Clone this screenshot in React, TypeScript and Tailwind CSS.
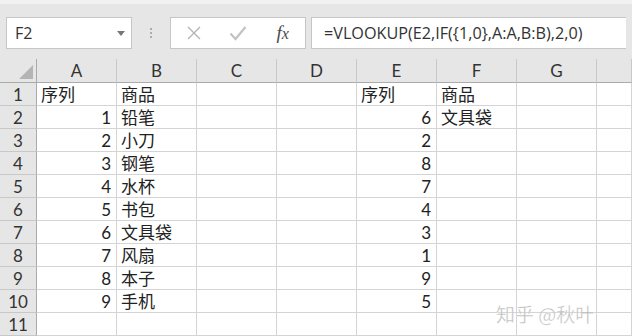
import React from 'react';

const COLS = ['A', 'B', 'C', 'D', 'E', 'F', 'G', ''];

// row data: [A, B, E, F]
const ROWS: [string, string, string, string][] = [
  ['序列', '商品', '序列', '商品'],
  ['1', '铅笔', '6', '文具袋'],
  ['2', '小刀', '2', ''],
  ['3', '钢笔', '8', ''],
  ['4', '水杯', '7', ''],
  ['5', '书包', '4', ''],
  ['6', '文具袋', '3', ''],
  ['7', '风扇', '1', ''],
  ['8', '本子', '9', ''],
  ['9', '手机', '5', ''],
  ['', '', '', ''],
];

const FONT = { fontFamily: 'Lato, "Noto Sans CJK SC", sans-serif' };

const isNum = (s: string) => /^\d+$/.test(s);

const Cell: React.FC<{ value?: string }> = ({ value = '' }) => (
  <div
    className={`h-[23px] border-r border-b border-[#d4d4d4] pl-[4px] pr-[5px] pt-[1px] text-[17px] leading-[22px] text-[#222] whitespace-nowrap overflow-visible ${
      isNum(value) ? 'text-right' : 'text-left'
    }`}
  >
    {value}
  </div>
);

export default function App() {
  return (
    <div className="relative w-[632px] h-[336px] overflow-hidden bg-white" style={FONT}>
      {/* formula bar */}
      <div className="h-[59px] bg-[#e6e6e6] border-t-[4px] border-[#f1f1f1] flex items-start pt-[13px] px-[6px]">
        <div className="w-[126px] h-[32px] bg-white border border-[#c6c6c6] flex items-center justify-between pl-[8px] pr-[6px]">
          <span className="text-[16px] text-[#333]" style={{ fontFamily: '"Open Sans", sans-serif' }}>F2</span>
          <svg width="8" height="5" viewBox="0 0 8 5"><path d="M0 0h8L4 5z" fill="#777" /></svg>
        </div>
        <div className="w-[38px] h-[32px] flex items-center justify-center">
          <svg width="4" height="12" viewBox="0 0 4 12">
            <circle cx="2" cy="2" r="1" fill="#999" />
            <circle cx="2" cy="6" r="1" fill="#999" />
            <circle cx="2" cy="10" r="1" fill="#999" />
          </svg>
        </div>
        <div className="w-[136px] h-[32px] bg-white border border-[#c6c6c6] flex items-center">
          <div className="w-[45px] flex justify-center pl-[2px]">
            <svg width="16" height="16" viewBox="0 0 16 16">
              <path d="M2 2l12 12M14 2L2 14" stroke="#b5b5b5" strokeWidth="1.4" />
            </svg>
          </div>
          <div className="w-[45px] flex justify-center">
            <svg width="18" height="16" viewBox="0 0 18 16">
              <path d="M1.5 8.5l5 5.5L16.5 2" stroke="#c2c2c2" strokeWidth="2.2" fill="none" />
            </svg>
          </div>
          <div className="w-[45px] flex justify-center">
            <span className="text-[19px] italic text-[#4a4a4a]" style={{ fontFamily: '"Liberation Serif", serif' }}>
              f<span className="text-[16px]">x</span>
            </span>
          </div>
        </div>
        <div className="ml-[5px] flex-1 h-[32px] bg-white border border-[#c6c6c6] border-r-0 flex items-center pl-[12px]">
          <span className="text-[16.2px] text-[#333]" style={{ fontFamily: '"Open Sans", sans-serif' }}>
            =VLOOKUP(E2,IF({'{'}1,0{'}'},A:A,B:B),2,0)
          </span>
        </div>
      </div>

      {/* sheet */}
      <div className="grid grid-cols-[37px_repeat(7,80px)_1fr]">
        {/* header row */}
        <div className="relative h-[24px] bg-[#e6e6e6] border-r border-b border-[#ababab]">
          <svg className="absolute right-[3px] bottom-[3px]" width="14" height="14" viewBox="0 0 14 14">
            <path d="M14 0v14H0z" fill="#b4b4b4" />
          </svg>
        </div>
        {COLS.map((c, i) => (
          <div
            key={i}
            className="h-[24px] bg-[#e6e6e6] border-r border-b border-r-[#c8c8c8] border-b-[#ababab] text-center text-[17px] leading-[24px] text-[#333]"
          >
            {c}
          </div>
        ))}

        {ROWS.map((r, ri) => (
          <React.Fragment key={ri}>
            <div className="h-[23px] bg-[#e6e6e6] border-r border-r-[#ababab] border-b border-b-[#c8c8c8] pt-[1px] text-center text-[17px] leading-[22px] text-[#333]">
              {ri + 1}
            </div>
            <Cell value={r[0]} />
            <Cell value={r[1]} />
            <Cell />
            <Cell />
            <Cell value={r[2]} />
            <Cell value={r[3]} />
            <Cell />
            <Cell />
          </React.Fragment>
        ))}
      </div>

      {/* watermark */}
      <div
        className="absolute left-[496px] top-[300px] text-[19px] text-[rgba(160,160,160,0.7)]"
        style={{ fontFamily: '"Noto Sans CJK SC", sans-serif', WebkitTextStroke: '0.4px rgba(255,255,255,0.9)' }}
      >
        知乎 @秋叶
      </div>
    </div>
  );
}
